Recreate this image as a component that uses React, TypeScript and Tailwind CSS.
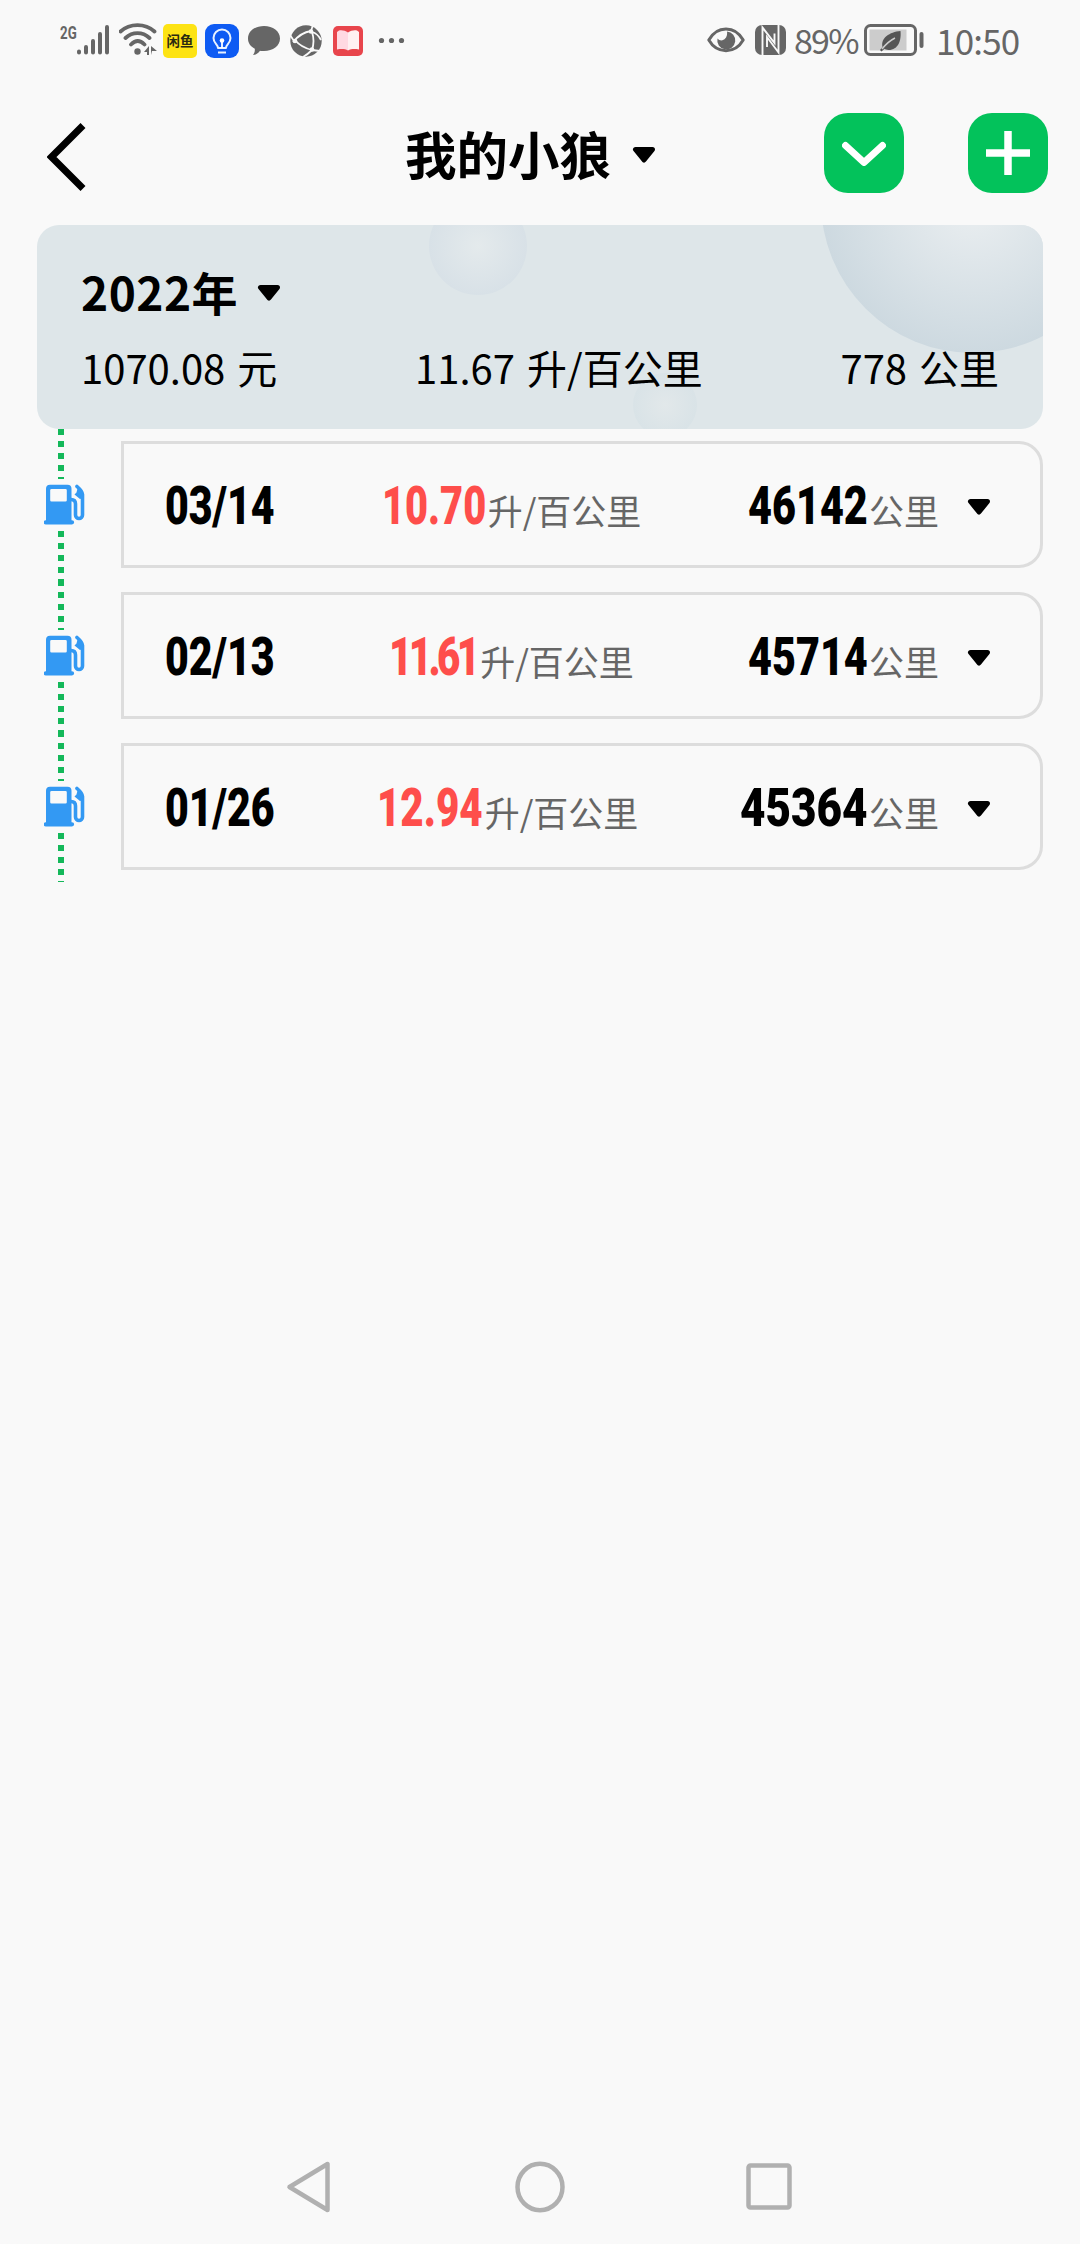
interface FuelRecord {
  date: string;
  usage: string;
  usageClass: string;
  usageBox: string;
  usageAlign: string;
  mileage: string;
  mileageClass: string;
  mileageBox: string;
}

const records: FuelRecord[] = [
  {
    date: '03/14',
    usage: '10.70',
    usageClass: 'scale-x-[0.75]',
    usageBox: 'w-[106px]',
    usageAlign: 'pr-px',
    mileage: '46142',
    mileageClass: 'scale-x-[0.78]',
    mileageBox: 'w-[118px]',
  },
  {
    date: '02/13',
    usage: '11.61',
    usageClass: 'scale-x-[0.76] tracking-[-4.8px]',
    usageBox: 'w-[91px]',
    usageAlign: 'pr-px',
    mileage: '45714',
    mileageClass: 'scale-x-[0.78]',
    mileageBox: 'w-[118px]',
  },
  {
    date: '01/26',
    usage: '12.94',
    usageClass: 'scale-x-[0.76]',
    usageBox: 'w-[108px]',
    usageAlign: 'pr-[9px]',
    mileage: '45364',
    mileageClass: 'scale-x-[0.83]',
    mileageBox: 'w-[126px]',
  },
];

function Caret() {
  return (
    <svg width="24" height="18" viewBox="0 0 24 18" className="relative top-[2px] shrink-0">
      <path d="M3.5 3.5h17L12 14z" fill="#000" stroke="#000" strokeWidth="5" strokeLinejoin="round" />
    </svg>
  );
}

function FuelIcon() {
  return (
    <svg width="42" height="42" viewBox="0 0 42 42" fill="none">
      <path
        fillRule="evenodd"
        fill="#3399f3"
        d="M6 0.7h17.5a4 4 0 0 1 4 4v31.5h0.5a2 2 0 0 1 0 4.3H1.8a2 2 0 0 1 0-4.3H2V4.7a4 4 0 0 1 4-4zM7.5 5a1.3 1.3 0 0 0-1.3 1.3v10a1.3 1.3 0 0 0 1.3 1.3h14a1.3 1.3 0 0 0 1.3-1.3v-10A1.3 1.3 0 0 0 21.500 5z"
      />
      <path d="M27 15.500c3.500 0 4.500 1.500 4.500 4.500v11a3.500 3.500 0 0 0 7 0V10.500c0-3-2-5-5.500-8" stroke="#3399f3" strokeWidth="3.600" strokeLinecap="round" />
      <path d="M33.500 4.500l-1 4-2 2 5.500 4.500 3-1V8z" fill="#3399f3" />
    </svg>
  );
}

function SignalIcons() {
  return (
    <div className="flex items-start h-[36px]">
      <span className="w-[17px] text-[19px] leading-[22px] font-bold font-['Roboto',sans-serif]">
        <span className="inline-block origin-left scale-x-[0.7]">2G</span>
      </span>
      <svg width="34" height="34" viewBox="0 0 34 34" stroke="#666" strokeWidth="4" strokeLinecap="round">
        <path d="M2 29.500v1M9 25v5.500M16 19v11.500M23 12v18.500M30 5v25.500" />
      </svg>
      <svg width="40" height="34" viewBox="0 0 40 34" fill="none" stroke="#666" strokeWidth="3.800" className="ml-[8px]">
        <path d="M1.500 9.500c9.500-8.500 24.500-8.500 34 0M6.500 16c7-6.500 17-6.500 24 0M12 22.500c4.500-4.500 9-4.500 13.500 0" strokeLinecap="round" />
        <circle cx="18.500" cy="29.500" r="3.200" fill="#666" stroke="none" />
        <path d="M25 30l5-6v9h-2v-3zM32 24v9l1-4h5z" fill="#666" stroke="none" />
      </svg>
    </div>
  );
}

function StatusBar() {
  return (
    <div className="h-[80px] pt-[22px] pl-[60px] pr-[57px] flex items-start text-[#666]">
      <SignalIcons />
      <div className="ml-[4px] mt-[2px] w-[34px] h-[34px] rounded-[5px] bg-[#fde314] flex items-center justify-center text-[13.5px] leading-none font-bold text-[#2b2a10]">
        闲鱼
      </div>
      <svg width="34" height="34" viewBox="0 0 34 34" fill="none" className="ml-[8px] mt-[2px]">
        <rect width="34" height="34" rx="9" fill="#0e5bf3" />
        <path d="M13 24c0-3.500-4.500-4.500-4.500-10a8.500 8.500 0 0 1 17 0c0 5.500-4.500 6.500-4.500 10zM13 28.500h8" stroke="#e8f2ff" strokeWidth="2" strokeLinejoin="round" />
        <circle cx="17" cy="16.500" r="2.300" fill="#fff" />
        <path d="M17 17v7" stroke="#fff" strokeWidth="1.800" />
      </svg>
      <svg width="32" height="34" viewBox="0 0 32 34" className="ml-[9px] mt-[2px]">
        <path d="M16 2c9 0 16 5 16 12.500S25 27 16 27c-1.500 0-3 0-4-.3-2.200 2.800-4 4-7 4.300 1.500-2 2-4 1.800-6.300C2.500 22.500 0 19 0 14.500 0 7 7 2 16 2z" fill="#666" />
      </svg>
      <svg width="32" height="34" viewBox="0 0 32 34" fill="none" className="ml-[10px] mt-[2px]">
        <circle cx="16" cy="17" r="15.700" fill="#666" />
        <g stroke="#f9f9f9" strokeWidth="1.800">
          <path d="M21 7C14 8 8 12 3 18M5 16c4 5 9 8 17 10M22 8c2 6 2 12 0 18M21 7l2-6M22 8c4 1 7 4 9 8M4 17l-4-6M22 26l8 1M22 26c-2 2-5 5-9 7" />
        </g>
        <circle cx="21" cy="7.500" r="2.300" fill="#f9f9f9" />
        <circle cx="5" cy="17" r="2.300" fill="#f9f9f9" />
        <circle cx="22" cy="25.500" r="2.300" fill="#f9f9f9" />
      </svg>
      <svg width="30" height="30" viewBox="0 0 30 30" className="ml-[11px] mt-[4px]">
        <rect width="30" height="30" rx="5" fill="#e8454c" />
        <path d="M4 6l2-1.500c3-.5 6 0 9 2v18c-3-1.500-6-1.700-11-1z" fill="#ffd9e2" />
        <path d="M26 6l-2-1.500c-3-.5-6 0-9 2v18c3-1.500 6-1.700 11-1z" fill="#fff0f2" />
      </svg>
      <svg width="28" height="34" viewBox="0 0 28 34" fill="#666" className="ml-[15px] mt-[2px]">
        <circle cx="3.500" cy="16.500" r="2.600" />
        <circle cx="13.500" cy="16.500" r="2.600" />
        <circle cx="23.500" cy="16.500" r="2.600" />
      </svg>

      <svg width="38" height="34" viewBox="0 0 38 34" fill="none" className="ml-auto mt-[2px]">
        <path d="M1.800 16C10 1.200 28 1.200 36.200 16 28 30.200 10 30.200 1.800 16z" stroke="#666" strokeWidth="3" strokeLinejoin="round" />
        <path d="M20 7.500a9 9 0 1 1-9.500 7c1.500 1.800 4 2.500 6 1.300 3-1.500 4-5 3.500-8.300z" fill="#666" />
      </svg>
      <svg width="31" height="31" viewBox="0 0 31 31" fill="none" className="ml-[10px] mt-[3px]">
        <rect width="31" height="30" rx="7" fill="#666" />
        <path d="M7.500 30V2.500L19.500 18V8.500" stroke="#f9f9f9" strokeWidth="1.900" />
        <path d="M12 22v-10l11.500 15.500V0" stroke="#f9f9f9" strokeWidth="1.900" />
      </svg>
      <span className="ml-[8px] mt-px w-[66px] text-[34px] leading-none tracking-[-1.8px] whitespace-nowrap">89%</span>
      <svg width="60" height="34" viewBox="0 0 60 34" fill="none" className="ml-[4px] mt-[2px]">
        <rect x="1.500" y="1.500" width="50" height="29" rx="5" stroke="#666" strokeWidth="3" />
        <rect x="5.500" y="5.500" width="37" height="21" fill="#ccc" />
        <path d="M36.500 7c1 9-2 19-12 19-2 0-3-.5-4-1.200l-3 2.700-1.500-1.500 2.500-3c-2-9 7-15 18-16z" fill="#555" />
        <path d="M18 25c4-5 8-8.500 13-11" stroke="#ccc" strokeWidth="1.500" />
        <path d="M57.500 10v12" stroke="#666" strokeWidth="4" strokeLinecap="round" />
      </svg>
      <span className="ml-[12px] w-[87px] text-[35px] leading-none tracking-[-0.8px] whitespace-nowrap">10:50</span>
    </div>
  );
}

function Header() {
  return (
    <div className="h-[145px] pl-[47px] pr-[32px] flex items-center">
      <svg width="40" height="68" viewBox="0 0 40 68" fill="none" className="mt-[8px]">
        <path d="M36 2.500L4.500 34 36 65.500" stroke="#000" strokeWidth="7" />
      </svg>
      <h1 className="mt-px ml-[318px] text-[51.5px] leading-none font-bold">我的小狼</h1>
      <span className="ml-[21px]">
        <Caret />
      </span>
      <button className="ml-auto w-[80px] h-[80px] rounded-[24px] bg-[#03c25b] flex items-center justify-center">
        <svg width="44" height="26" viewBox="0 0 44 26" fill="none">
          <path d="M3.500 5.500l18.500 17L40.500 5.500" stroke="#fff" strokeWidth="7" strokeLinecap="round" strokeLinejoin="round" />
        </svg>
      </button>
      <button className="ml-[64px] w-[80px] h-[80px] rounded-[24px] bg-[#03c25b] flex items-center justify-center">
        <svg width="44" height="44" viewBox="0 0 44 44">
          <path d="M22 0v44M0 22h44" stroke="#fff" strokeWidth="7.500" />
        </svg>
      </button>
    </div>
  );
}

function YearSummary() {
  return (
    <section className="relative overflow-hidden mx-[37px] h-[204px] rounded-[22px] bg-[#dee6e9] pt-[43px] px-[44px]">
      <div className="absolute left-[392px] top-[-28px] w-[98px] h-[98px] rounded-full bg-[radial-gradient(circle_closest-side,#e4eaec,#d8e1e7)]" />
      <div className="absolute left-[596px] top-[148px] w-[64px] h-[64px] rounded-full bg-[radial-gradient(circle_closest-side,#e2e8ea,#d9e3e7)]" />
      <div className="absolute left-[784px] top-[-176px] w-[304px] h-[304px] rounded-full bg-[radial-gradient(circle_closest-side,#ebeff1,#cdd9e0)]" />
      <div className="relative flex items-center">
        <h2 className="text-[46px] leading-none font-bold tracking-[0.5px]">2022年</h2>
        <span className="ml-[19px]">
          <Caret />
        </span>
      </div>
      <div className="relative mt-[33px] flex justify-between text-[40px] leading-none [word-spacing:3px]">
        <span>1070.08 元</span>
        <span>11.67 升/百公里</span>
        <span>778 公里</span>
      </div>
    </section>
  );
}

function RecordRow({ record }: { record: FuelRecord }) {
  return (
    <div className="h-[151px] pl-[40px] pr-[37px] flex">
      <div className="w-[81px] flex flex-col">
        <div className="ml-[18px] w-[6px] h-[50px] bg-[repeating-linear-gradient(to_bottom,#14b85a_0_6px,transparent_6px_12px)]" />
        <div className="h-[52px] pt-[5px] pl-[4px]">
          <FuelIcon />
        </div>
        <div className="ml-[18px] w-[6px] h-[49px] bg-[repeating-linear-gradient(to_bottom,#14b85a_0_6px,transparent_6px_12px)]" />
      </div>
      <div className="mt-[12px] h-[127px] flex-1 border-[3px] border-[#ddd] rounded-r-[24px] flex items-center pl-[41px] pr-[49px]">
        <div className="w-[210px] pt-[2px] text-[53px] leading-[60px] font-black font-['Roboto',sans-serif]">
          <span className="inline-block origin-left scale-x-[0.775]">{record.date}</span>
        </div>
        <div className={`w-[274px] pt-[2px] flex items-baseline justify-center whitespace-nowrap ${record.usageAlign}`}>
          <div className={`${record.usageBox} text-[53px] leading-[60px] font-black text-[#fe4e4b] font-['Roboto',sans-serif]`}>
            <span className={`inline-block origin-left ${record.usageClass}`}>{record.usage}</span>
          </div>
          <span className="relative top-px text-[35px] leading-none text-[#666]">升/百公里</span>
        </div>
        <div className="flex-1 pt-[2px] flex items-baseline justify-end whitespace-nowrap">
          <div className={`${record.mileageBox} text-[53px] leading-[60px] font-black font-['Roboto',sans-serif]`}>
            <span className={`inline-block origin-left ${record.mileageClass}`}>{record.mileage}</span>
          </div>
          <span className="relative top-px ml-[3px] text-[35px] leading-none text-[#666]">公里</span>
        </div>
        <span className="ml-[28px]">
          <Caret />
        </span>
      </div>
    </div>
  );
}

function NavBar() {
  return (
    <div className="mt-auto h-[114px] flex items-center justify-center gap-[180px]">
      <svg width="50" height="54" viewBox="0 0 50 54" fill="none" stroke="#b0b0b0" strokeWidth="4.500" strokeLinejoin="round">
        <path d="M42.500 4v46L4.500 27z" />
      </svg>
      <svg width="50" height="54" viewBox="0 0 50 54" fill="none" stroke="#b0b0b0" strokeWidth="4.500">
        <ellipse cx="25" cy="27" rx="22.500" ry="23.200" />
      </svg>
      <svg width="50" height="54" viewBox="0 0 50 54" fill="none" stroke="#b0b0b0" strokeWidth="4.500">
        <rect x="3.500" y="5.500" width="41" height="42" rx="2" />
      </svg>
    </div>
  );
}

export default function App() {
  return (
    <div className="w-[1080px] h-[2244px] flex flex-col bg-[#f9f9f9] text-black font-['Noto_Sans_CJK_SC',sans-serif]">
      <StatusBar />
      <Header />
      <YearSummary />
      <div>
        {records.map((record) => (
          <RecordRow key={record.date} record={record} />
        ))}
      </div>
      <NavBar />
    </div>
  );
}
